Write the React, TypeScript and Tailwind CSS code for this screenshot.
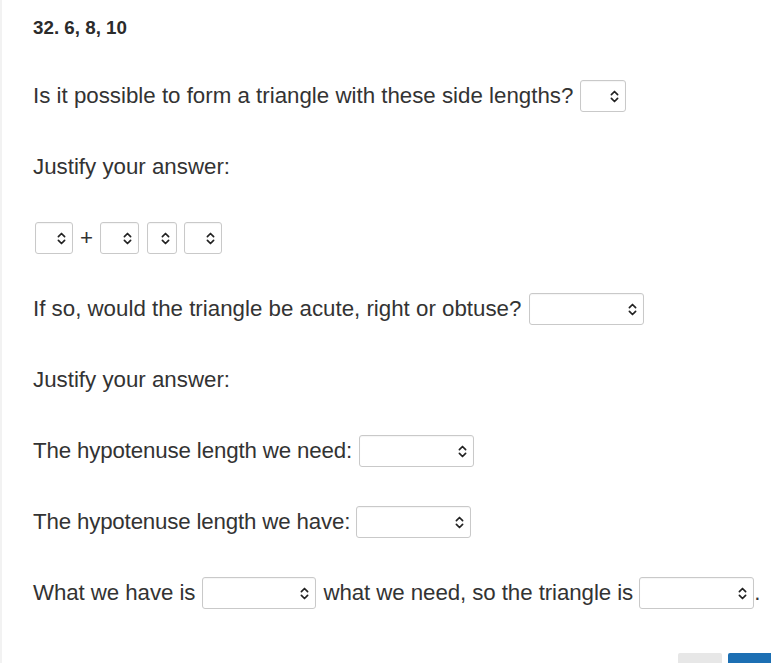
import React from 'react';

function Chevrons() {
  return (
    <svg width="9" height="13" viewBox="0 0 9 13" fill="none" stroke="#222" strokeWidth="1.7" strokeLinecap="round" strokeLinejoin="round">
      <path d="M1.4 4.6 L4.5 1.5 L7.6 4.6" />
      <path d="M1.4 8.4 L4.5 11.5 L7.6 8.4" />
    </svg>
  );
}

function Select({ w }: { w: string }) {
  return (
    <span className={`${w} inline-flex h-[32px] shrink-0 items-center justify-end rounded-[3px] border border-[#c9c9c9] bg-white pr-[6px] shadow-[inset_0_1px_1px_rgba(0,0,0,0.04)]`}>
      <Chevrons />
    </span>
  );
}

export default function App() {
  return (
    <div className="min-h-screen border-l-2 border-[#f2f2f2] bg-white text-[#333] font-['Liberation_Sans',Arial,sans-serif]">
      <div className="pl-[31px] pt-[17px]">
        <h1 className="text-[18.8px] font-bold leading-[22px] text-[#2b2b2b]">32. 6, 8, 10</h1>

        <div className="mt-[41px] flex flex-col gap-[39px] text-[22.3px] whitespace-nowrap">
          <div className="flex h-[32px] items-center gap-[7px]">
            <span>Is it possible to form a triangle with these side lengths?</span>
            <Select w="w-[46px]" />
          </div>

          <div className="flex h-[32px] items-center">
            <span>Justify your answer:</span>
          </div>

          <div className="flex h-[32px] items-center pl-[2px]">
            <Select w="w-[38px]" />
            <span className="mx-[7px]">+</span>
            <Select w="w-[39px]" />
            <span className="w-[8px]" />
            <Select w="w-[30px]" />
            <span className="w-[7px]" />
            <Select w="w-[38px]" />
          </div>

          <div className="flex h-[32px] items-center gap-[8px]">
            <span>If so, would the triangle be acute, right or obtuse?</span>
            <Select w="w-[115px]" />
          </div>

          <div className="flex h-[32px] items-center">
            <span>Justify your answer:</span>
          </div>

          <div className="flex h-[32px] items-center gap-[7px]">
            <span className="tracking-[-0.15px]">The hypotenuse length we need:</span>
            <Select w="w-[115px]" />
          </div>

          <div className="flex h-[32px] items-center gap-[6px]">
            <span className="tracking-[-0.17px]">The hypotenuse length we have:</span>
            <Select w="w-[115px]" />
          </div>

          <div className="flex h-[32px] items-center tracking-[-0.08px]">
            <span>What we have is</span>
            <span className="w-[7px]" />
            <Select w="w-[114px]" />
            <span className="w-[7px]" />
            <span>what we need, so the triangle is</span>
            <span className="w-[6px]" />
            <Select w="w-[115px]" />
            <span>.</span>
          </div>
        </div>
      </div>

      <div className="mt-[44px] flex justify-end gap-[6px]">
        <span className="h-[40px] w-[44px] rounded-t-[2px] bg-[#e7e7e7]" />
        <span className="h-[40px] w-[43px] rounded-tl-[2px] bg-[#1c6fb3]" />
      </div>
    </div>
  );
}
